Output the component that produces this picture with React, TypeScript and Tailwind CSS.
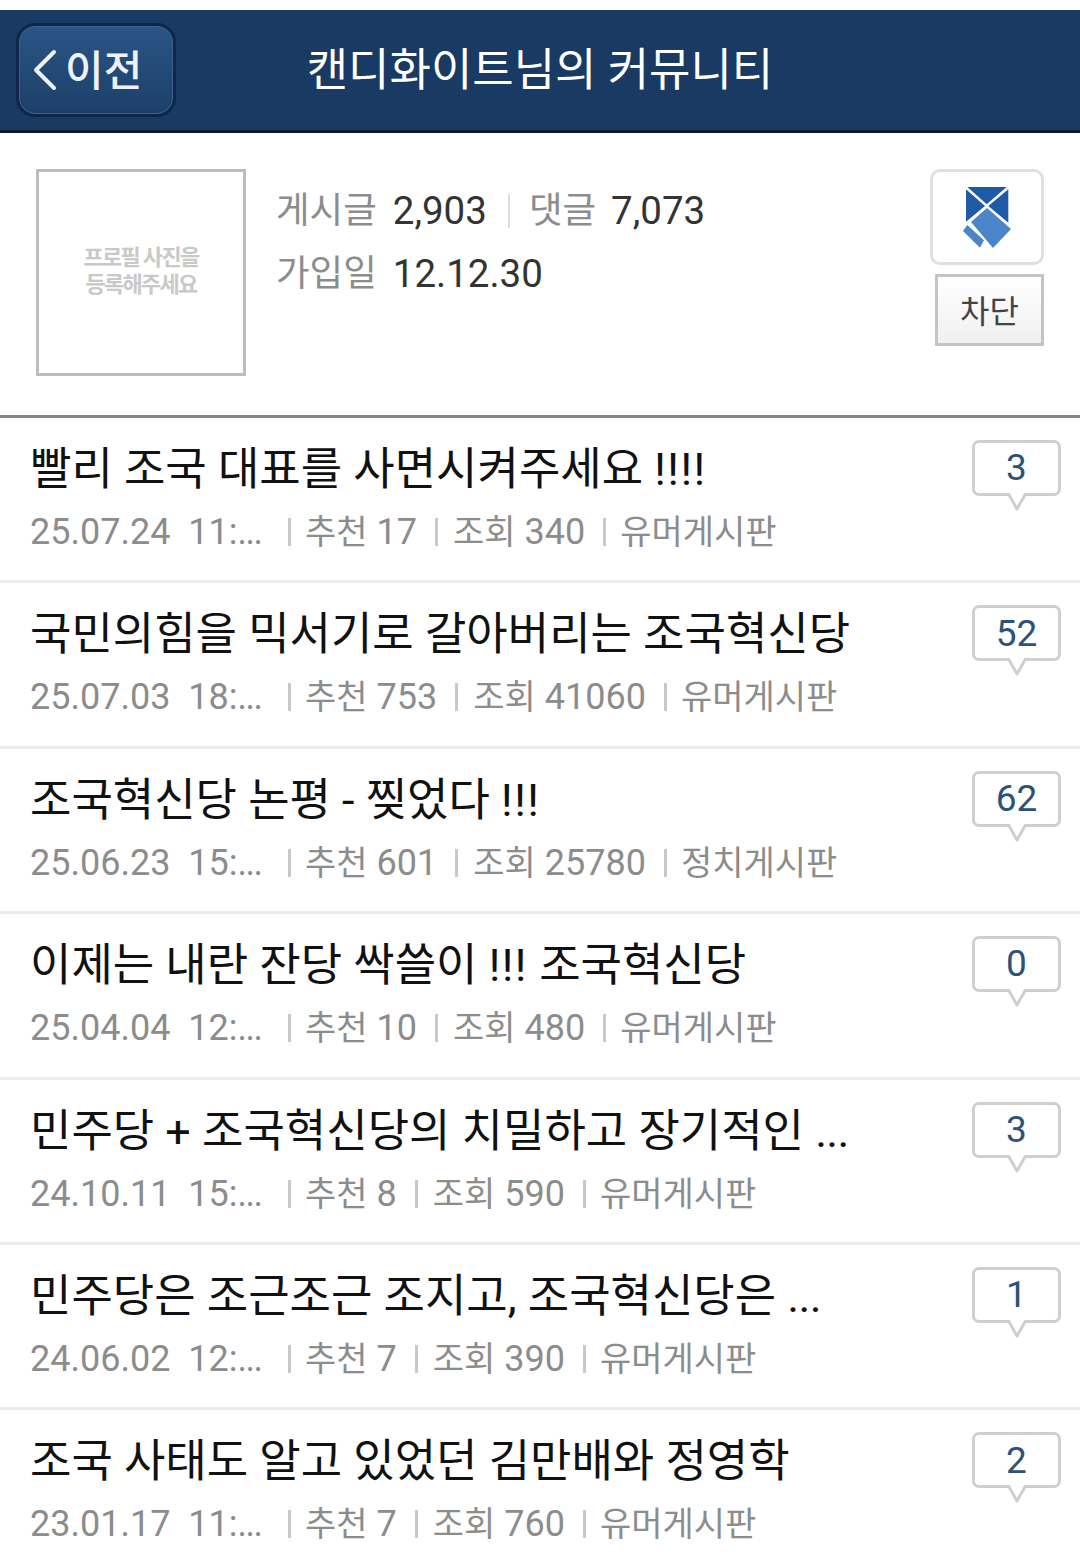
const FONT = "font-['Roboto','Noto_Sans_CJK_KR',sans-serif]";

interface Post {
  title: string;
  date: string;
  time: string;
  likes: number;
  views: number;
  board: string;
  comments: number;
}

const posts: Post[] = [
  { title: '빨리 조국 대표를 사면시켜주세요 !!!!', date: '25.07.24', time: '11:', likes: 17, views: 340, board: '유머게시판', comments: 3 },
  { title: '국민의힘을 믹서기로 갈아버리는 조국혁신당', date: '25.07.03', time: '18:', likes: 753, views: 41060, board: '유머게시판', comments: 52 },
  { title: '조국혁신당 논평 - 찢었다 !!!', date: '25.06.23', time: '15:', likes: 601, views: 25780, board: '정치게시판', comments: 62 },
  { title: '이제는 내란 잔당 싹쓸이 !!! 조국혁신당', date: '25.04.04', time: '12:', likes: 10, views: 480, board: '유머게시판', comments: 0 },
  { title: '민주당 + 조국혁신당의 치밀하고 장기적인 ...', date: '24.10.11', time: '15:', likes: 8, views: 590, board: '유머게시판', comments: 3 },
  { title: '민주당은 조근조근 조지고, 조국혁신당은 ...', date: '24.06.02', time: '12:', likes: 7, views: 390, board: '유머게시판', comments: 1 },
  { title: '조국 사태도 알고 있었던 김만배와 정영학', date: '23.01.17', time: '11:', likes: 7, views: 760, board: '유머게시판', comments: 2 },
];

function Bubble({ count }: { count: number }) {
  return (
    <div className="relative mt-[22px] mr-[19px] flex h-[56px] w-[89px] shrink-0 items-center justify-center rounded-[7px] border-[3px] border-[#cfcfcf] bg-white text-[37px] text-[#2c5277]">
      {count}
      <svg className="absolute left-[30px] top-[50px]" width="24" height="19" viewBox="0 0 24 19">
        <path d="M3 0 L12 16 L21 0" fill="#fff" stroke="#cfcfcf" strokeWidth="3" strokeLinejoin="round" />
      </svg>
    </div>
  );
}

// the exclamation marks run wider and the dots tighter than the stack gives
function Title({ text }: { text: string }) {
  return (
    <>
      {text.split(/(!+|\.\.\.)/).map((part, i) => {
        if (part.startsWith('!')) return <span key={i} className="tracking-[1.5px]">{part}</span>;
        if (part === '...') return <span key={i} className="tracking-[-0.7px]">{part}</span>;
        return part;
      })}
    </>
  );
}

function Row({ post }: { post: Post }) {
  return (
    <div className="flex h-[165.4px] items-start border-b-[3px] border-[#ebebeb] pl-[30px]">
      <div className="min-w-0 flex-1">
        <div className="mt-[24px] h-[56px] whitespace-nowrap text-[45px] leading-[56px] text-[#111]">
          <Title text={post.title} />
        </div>
        <div className="mt-[11px] flex h-[46px] items-center whitespace-nowrap text-[36px] leading-[46px] text-[#8c8c8c]">
          <span className="w-[258px] whitespace-pre">
            {post.date}  {post.time}
            <span className="tracking-[-1.5px]">...</span>
          </span>
          <span className="h-[28px] w-[3px] bg-[#c8c8c8]" />
          <span className="pl-[14px]"><span className="text-[34px]">추천</span> {post.likes}</span>
          <span className="ml-[18px] h-[28px] w-[3px] bg-[#c8c8c8]" />
          <span className="pl-[15px]"><span className="text-[34px]">조회</span> {post.views}</span>
          <span className="ml-[18px] h-[28px] w-[3px] bg-[#c8c8c8]" />
          <span className="pl-[14px] text-[34px]">{post.board}</span>
        </div>
      </div>
      <Bubble count={post.comments} />
    </div>
  );
}

export default function App() {
  return (
    <div className={`h-[1561px] w-[1080px] overflow-hidden bg-white pt-[10px] ${FONT}`}>
      <header className="relative flex h-[123px] items-center justify-center border-b-[3px] border-[#0d1a2e] bg-[#193a63]">
        <div className="absolute left-[16px] top-[13px] flex h-[94px] w-[160px] items-center rounded-[19px] border-[3px] border-[#10264a] bg-gradient-to-b from-[#2a5585] to-[#1c4069] pl-[13px] text-[42px] font-medium text-[#eef1f5] shadow-[inset_0_0_0_1px_#3a6390]">
          <svg width="26" height="42" viewBox="0 0 26 42" fill="none">
            <path d="M22 3 L4 21 L22 39" stroke="#eef1f5" strokeWidth="4" strokeLinecap="round" strokeLinejoin="round" />
          </svg>
          <span className="ml-[7px] pt-[3px] leading-none">이전</span>
        </div>
        <h1 className="pt-[1px] text-[45px] font-normal leading-none text-white">캔디화이트님의 커뮤니티</h1>
      </header>

      <section className="flex h-[285px] border-b-[3px] border-[#858585]">
        <div className="ml-[36px] mt-[36px] flex h-[207px] w-[210px] shrink-0 flex-col items-center justify-center border-[3px] border-[#bdbdbd] pb-[4px] text-[22px] font-bold leading-[27px] tracking-[-1.7px] text-[#c9c9c9]">
          <span>프로필 사진을</span>
          <span>등록해주세요</span>
        </div>
        <div className="ml-[30px] mt-[46px] flex-1 text-[38.5px] leading-[63px] text-[#333]">
          <div className="flex items-center">
            <span className="text-[36.5px] text-[#8c8c8c]">게시글</span>
            <span className="ml-[16px]">2,903</span>
            <span className="ml-[21px] h-[34px] w-[2px] bg-[#dcdcdc]" />
            <span className="ml-[19px] text-[36.5px] text-[#8c8c8c]">댓글</span>
            <span className="ml-[15px]">7,073</span>
          </div>
          <div className="flex items-center">
            <span className="text-[36.5px] text-[#8c8c8c]">가입일</span>
            <span className="ml-[16px]">12.12.30</span>
          </div>
        </div>
        <div className="mr-[36px] mt-[36px] flex w-[114px] shrink-0 flex-col items-end">
          <div className="flex h-[96px] w-[114px] items-center justify-center rounded-[10px] border-[3px] border-[#e0e0e0] bg-white">
            <svg width="48" height="61" viewBox="0 0 48 61">
              <path d="M4.3 0 H43.7 L23.7 17.3 Z" fill="#1e5aa6" />
              <path d="M3 2.3 L22 19 L3 34.7 Z" fill="#1e5aa6" />
              <path d="M45.3 2.3 L25.3 19 L45.3 35.7 Z" fill="#1e5aa6" />
              <path d="M24 21 L48 42 L30 61 L8 35 Z" fill="#4c84c8" />
              <path d="M4.3 38 L21 53.3 L17 60.7 L0 44 Z" fill="#4c84c8" />
            </svg>
          </div>
          <div className="mt-[9px] flex h-[72px] w-[109px] items-center justify-center border-[3px] border-[#c4c4c4] bg-gradient-to-b from-white to-[#f0f0f0] pt-[4px] text-[32px] text-[#444]">
            차단
          </div>
        </div>
      </section>

      {posts.map(post => (
        <Row key={post.date} post={post} />
      ))}
    </div>
  );
}
